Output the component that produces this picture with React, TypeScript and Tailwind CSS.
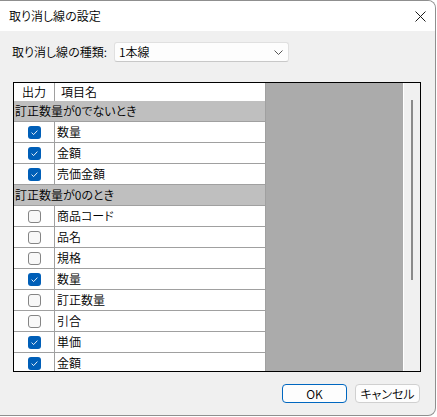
import React from "react";

type Row =
  | { kind: "group"; label: string }
  | { kind: "item"; label: string; checked: boolean };

const rows: Row[] = [
  { kind: "group", label: "訂正数量が0でないとき" },
  { kind: "item", label: "数量", checked: true },
  { kind: "item", label: "金額", checked: true },
  { kind: "item", label: "売価金額", checked: true },
  { kind: "group", label: "訂正数量が0のとき" },
  { kind: "item", label: "商品コード", checked: false },
  { kind: "item", label: "品名", checked: false },
  { kind: "item", label: "規格", checked: false },
  { kind: "item", label: "数量", checked: true },
  { kind: "item", label: "訂正数量", checked: false },
  { kind: "item", label: "引合", checked: false },
  { kind: "item", label: "単価", checked: true },
  { kind: "item", label: "金額", checked: true },
];

function CheckBox({ checked }: { checked: boolean }) {
  if (checked) {
    return (
      <div className="w-[13px] h-[13px] rounded-[3px] bg-[#005fb8] flex items-center justify-center">
        <svg width="13" height="13" viewBox="0 0 13 13">
          <path d="M3.6 6.6 L5.6 8.6 L9.4 4.6" fill="none" stroke="#ffffff" strokeWidth="0.9" />
        </svg>
      </div>
    );
  }
  return <div className="w-[13px] h-[13px] rounded-[3px] border border-[#858585] bg-[#f8f8f8]" />;
}

export default function App() {
  return (
    <div
      className="w-[437px] h-[417px] bg-white text-black text-[12px] leading-none font-[350]"
      style={{ fontFamily: '"Noto Sans CJK JP", "Noto Sans", sans-serif', fontFeatureSettings: '"palt"' }}
    >
      <div className="w-[436px] h-[416px] border-t border-r border-b border-[#8f8f8f] rounded-tr-[8px] rounded-br-[8px] overflow-hidden bg-[#f0f0f0] flex flex-col">
        {/* Title bar */}
        <div className="h-[30px] shrink-0 bg-white flex items-center justify-between pl-[9px] pr-[9px]">
          <span className="text-[12px]">取り消し線の設定</span>
          <svg width="11" height="11" viewBox="0 0 11 11">
            <path d="M0.5 0.5 L10.5 10.5 M10.5 0.5 L0.5 10.5" stroke="#1a1a1a" strokeWidth="1" fill="none" />
          </svg>
        </div>

        {/* Type selector */}
        <div className="flex items-center mt-[11px] pl-[12px] h-[20px]">
          <span className="w-[102px]">取り消し線の種類:</span>
          <div className="w-[175px] h-[20px] bg-[#fdfdfd] border border-[#e0e0e0] border-b-[#c8c8c8] rounded-[3px] flex items-center justify-between pl-[4px] pr-[5px]">
            <span>1本線</span>
            <svg width="9" height="5" viewBox="0 0 9 5">
              <path d="M0.5 0.5 L4.5 4.5 L8.5 0.5" stroke="#555555" strokeWidth="1" fill="none" />
            </svg>
          </div>
        </div>

        {/* Grid */}
        <div className="ml-[13px] mt-[20px] w-[408px] h-[290px] border border-black flex overflow-hidden">
          <div className="w-[252px] shrink-0 flex flex-col bg-[#ababab]">
            <div className="h-[18px] shrink-0 flex bg-white border-r border-[#a0a0a0]">
              <div className="w-[41px] border-r border-[#a0a0a0] flex items-center justify-center">出力</div>
              <div className="flex-1 flex items-center pl-[6px]">項目名</div>
            </div>
            {rows.map((r, i) =>
              r.kind === "group" ? (
                <div
                  key={i}
                  className="h-[21px] shrink-0 bg-[#bfbfbf] border-b border-r border-[#a0a0a0] flex items-center pl-[1px]"
                >
                  {r.label}
                </div>
              ) : (
                <div key={i} className="h-[21px] shrink-0 flex bg-white border-b border-r border-[#a0a0a0]">
                  <div className="w-[41px] border-r border-[#a0a0a0] flex items-center justify-center">
                    <CheckBox checked={r.checked} />
                  </div>
                  <div className="flex-1 flex items-center pl-[2px]">{r.label}</div>
                </div>
              )
            )}
          </div>
          <div className="w-[137px] shrink-0 bg-[#ababab]" />
          <div className="flex-1 bg-[#f0f0f0] border-l border-white pt-[17px] pl-[7px]">
            <div className="w-[2px] h-[180px] bg-[#8a8a8a]" />
          </div>
        </div>

        {/* Buttons */}
        <div className="flex justify-end gap-[8px] mt-[12px] pr-[15px]">
          <button className="w-[65px] h-[19px] rounded-[4px] border border-[#0067c0] bg-[#fdfdfd] flex items-center justify-center leading-none">
            OK
          </button>
          <button className="w-[65px] h-[19px] rounded-[4px] border border-[#d0d0d0] bg-[#fdfdfd] flex items-center justify-center leading-none">
            キャンセル
          </button>
        </div>
      </div>
    </div>
  );
}
